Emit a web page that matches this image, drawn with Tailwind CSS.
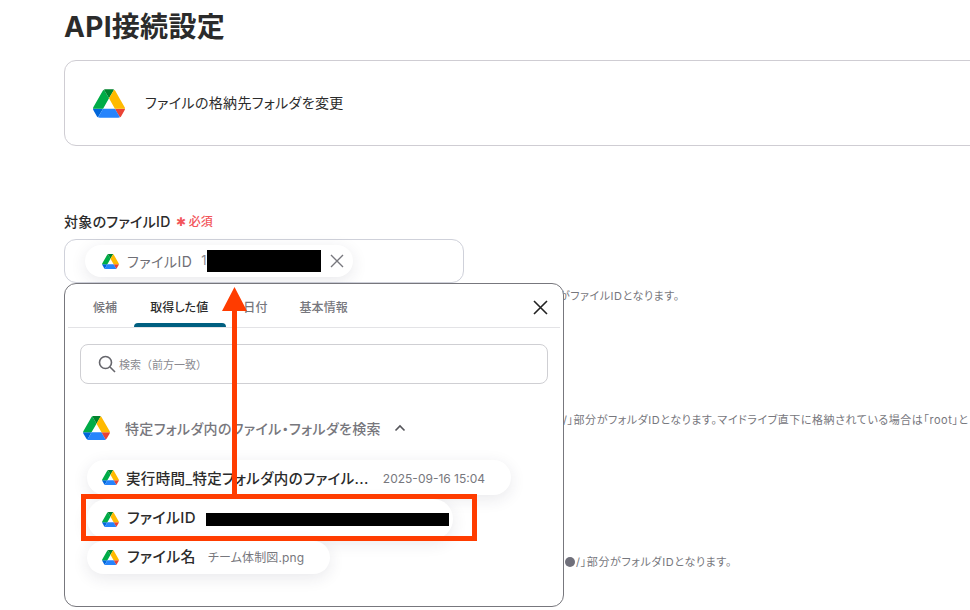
<!DOCTYPE html>
<html lang="ja">
<head>
  <meta charset="UTF-8">
  <script src="https://cdn.jsdelivr.net/npm/@tailwindcss/browser@4"></script>
  <title>API接続設定</title>
</head>
<body class="bg-white">
  <svg class="hidden">
    <symbol id="drive" viewBox="0 0 87.3 78">
      <path d="m6.6 66.85 3.85 6.65c.8 1.4 1.95 2.5 3.3 3.3l13.75-23.8h-27.5c0 1.55.4 3.1 1.2 4.5z" fill="#0066da"/>
      <path d="m43.65 25-13.75-23.8c-1.35.8-2.5 1.9-3.3 3.3l-25.4 44a9.06 9.06 0 0 0-1.2 4.5h27.5z" fill="#00ac47"/>
      <path d="m73.55 76.8c1.35-.8 2.5-1.9 3.3-3.3l1.6-2.75 7.65-13.25c.8-1.4 1.2-2.95 1.2-4.5h-27.502l5.852 11.5z" fill="#ea4335"/>
      <path d="m43.65 25 13.75-23.8c-1.35-.8-2.9-1.2-4.5-1.2h-18.5c-1.6 0-3.15.45-4.5 1.2z" fill="#00832d"/>
      <path d="m59.8 53h-32.3l-13.75 23.8c1.35.8 2.9 1.2 4.5 1.2h50.8c1.6 0 3.15-.45 4.5-1.2z" fill="#2684fc"/>
      <path d="m73.4 26.5-12.7-22c-.8-1.4-1.95-2.5-3.3-3.3l-13.75 23.8 16.15 28h27.45c0-1.55-.4-3.1-1.2-4.5z" fill="#ffba00"/>
    </symbol>
  </svg>

  <div class="relative h-[610px] w-[970px] overflow-hidden pl-16 font-['Inter','Noto_Sans_CJK_JP',sans-serif] tracking-[0.03em] [font-feature-settings:'palt'] text-[#2b2b2b]">
    <!-- page header -->
    <h1 class="h-[60px] pt-[8px] text-[28px] leading-[38px] font-bold tracking-[0.3px]">API接続設定</h1>

    <div class="flex h-[86px] w-[1000px] items-center gap-[20px] rounded-xl border border-[#cfcdd3] pl-[28px]">
      <svg class="h-[29px] w-[32px]"><use href="#drive"/></svg>
      <span class="-translate-y-px text-[14px] tracking-[0.35px]">ファイルの格納先フォルダを変更</span>
    </div>

    <!-- form field -->
    <div class="mt-[64px] flex h-[22px] items-center gap-[5px]">
      <span class="text-[14px] font-medium tracking-[0.3px]">対象のファイルID</span>
      <span class="translate-y-px text-[12px] font-medium tracking-normal text-[#f2555a]">✱ 必須</span>
    </div>
    <div class="mt-[7px] flex h-[44px] w-[400px] items-center rounded-xl border border-[#cfd1da] pl-[20px]">
      <div class="flex h-[32px] w-[268px] items-center rounded-full bg-white pl-[17px] shadow-[0_4px_16px_rgba(40,40,70,0.1)]">
        <svg class="h-[15px] w-[17px]"><use href="#drive"/></svg>
        <span class="ml-[8px] text-[14px] tracking-[0.5px] text-[#6f6f76]">ファイルID</span>
        <span class="ml-[9px] text-[13px] text-[#8a8a90]">1</span>
        <span class="h-[22px] w-[114px] bg-black"></span>
        <svg class="ml-[8px] h-4 w-4 text-[#77777d]" viewBox="0 0 16 16" fill="none" stroke="currentColor" stroke-width="1.4"><path d="M2 2l12 12M14 2L2 14"/></svg>
      </div>
    </div>

    <!-- help texts behind the popover -->
    <div class="text-[11px] tracking-[0.55px] text-[#77777d]">
      <p class="ml-[495px] mt-[5px] h-[16px] whitespace-nowrap leading-[16px]">がファイルIDとなります。</p>
      <p class="ml-[499px] mt-[108px] h-[16px] whitespace-nowrap leading-[16px]">/」部分がフォルダIDとなります。マイドライブ直下に格納されている場合は「root」と</p>
      <p class="ml-[501px] mt-[126px] h-[16px] whitespace-nowrap leading-[16px] tracking-[0.65px]"><span class="mr-px inline-block h-[10px] w-[10px] translate-y-px rounded-full bg-[#6f6f7a]"></span>/」部分がフォルダIDとなります。</p>
    </div>

    <!-- popover -->
    <div class="absolute top-[283px] left-[64px] h-[324px] w-[500px] rounded-xl border border-[#77777d] bg-white">
      <div class="relative mx-[3px] flex h-[44px] border-b border-[#e3e3e6] text-[12px] font-medium tracking-[0.1px] text-[#77777d]">
        <span class="ml-[25px] pt-[15px]">候補</span>
        <span class="ml-[33px] pt-[15px] text-[#2b2b2b]">取得した値</span>
        <span class="ml-[35px] pt-[15px]">日付</span>
        <span class="ml-[32px] pt-[15px]">基本情報</span>
        <span class="absolute bottom-0 left-[66px] h-1 w-[92px] rounded-t-sm bg-[#005f80]"></span>
        <svg class="absolute top-[16px] right-[12px] h-[15px] w-[15px] text-[#222]" viewBox="0 0 15 15" fill="none" stroke="currentColor" stroke-width="1.6"><path d="M1 1l13 13M14 1L1 14"/></svg>
      </div>

      <div class="mx-[15px] mt-[16px] flex h-[40px] items-center rounded-lg border border-[#cfcfd3] pl-[17px]">
        <svg class="h-[18px] w-[18px] text-[#66666c]" viewBox="0 0 18 18" fill="none" stroke="currentColor" stroke-width="1.6"><circle cx="7.5" cy="7.5" r="6"/><path d="M12 12l5 5"/></svg>
        <span class="ml-[3px] translate-y-px text-[11px] tracking-normal [font-feature-settings:normal] text-[#8a8a90]">検索（前方一致）</span>
      </div>

      <div class="mt-[31px] flex h-[26px] items-center pl-[18px]">
        <svg class="h-[24px] w-[27px]"><use href="#drive"/></svg>
        <span class="ml-[15px] text-[14px] font-medium tracking-[0.35px] text-[#77777d]">特定フォルダ内のファイル・フォルダを検索</span>
        <svg class="ml-[13px] h-3 w-3 text-[#55555a]" viewBox="0 0 12 12" fill="none" stroke="currentColor" stroke-width="1.6"><path d="M1.5 8.5L6 4l4.500 4.500"/></svg>
      </div>

      <!-- value chips -->
      <div class="mt-[19px] flex flex-col items-start pl-[22px]">
        <div class="flex h-[35px] w-[424px] items-center rounded-full bg-white pl-[15px] shadow-[0_4px_16px_rgba(40,40,70,0.1)]">
          <svg class="h-[15px] w-[17px]"><use href="#drive"/></svg>
          <span class="ml-[7px] translate-y-px text-[14.5px] font-medium tracking-[0.35px]">実行時間_特定フォルダ内のファイル...</span>
          <span class="ml-[14px] translate-y-px text-[12px] tracking-normal text-[#77777d]">2025-09-16 15:04</span>
        </div>
        <div class="mt-[4px] flex h-[40px] w-[366px] items-center rounded-full bg-white pl-[15px] shadow-[0_4px_16px_rgba(40,40,70,0.1)]">
          <svg class="h-[15px] w-[17px]"><use href="#drive"/></svg>
          <span class="ml-[8px] -translate-y-px text-[15px] font-medium tracking-[0.35px]">ファイルID</span>
          <span class="ml-[10px] h-[13px] w-[243px] bg-black"></span>
        </div>
        <div class="mt-[2px] flex h-[33px] w-[243px] items-center rounded-full bg-white pl-[15px] shadow-[0_4px_16px_rgba(40,40,70,0.1)]">
          <svg class="h-[15px] w-[17px]"><use href="#drive"/></svg>
          <span class="ml-[8px] text-[15px] font-medium tracking-[0.4px]">ファイル名</span>
          <span class="ml-[12px] text-[12px] tracking-[0.15px] text-[#77777d]">チーム体制図.png</span>
        </div>
      </div>
    </div>

    <!-- annotation -->
    <div class="absolute top-[494px] left-[81px] h-[47px] w-[396px] border-[5px] border-[#ff3c00]"></div>
    <svg class="absolute top-[287px] left-[222px] h-[207px] w-[26px]" viewBox="0 0 26 207" fill="#ff3c00"><path d="M12.500 0L25 24H15v183h-5V24H0z"/></svg>
  </div>
</body>
</html>
